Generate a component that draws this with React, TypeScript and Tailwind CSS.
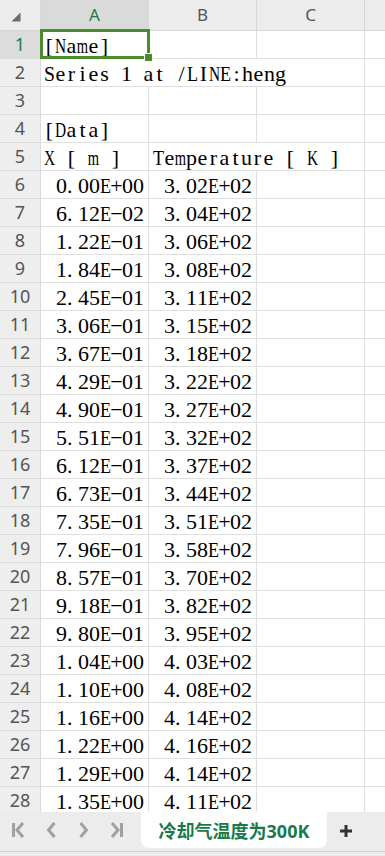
import clsx from "clsx";

const colA = [
  "0.00E+00", "6.12E-02", "1.22E-01", "1.84E-01", "2.45E-01", "3.06E-01",
  "3.67E-01", "4.29E-01", "4.90E-01", "5.51E-01", "6.12E-01", "6.73E-01",
  "7.35E-01", "7.96E-01", "8.57E-01", "9.18E-01", "9.80E-01", "1.04E+00",
  "1.10E+00", "1.16E+00", "1.22E+00", "1.29E+00", "1.35E+00",
];

const colB = [
  "3.02E+02", "3.04E+02", "3.06E+02", "3.08E+02", "3.11E+02", "3.15E+02",
  "3.18E+02", "3.22E+02", "3.27E+02", "3.32E+02", "3.37E+02", "3.44E+02",
  "3.51E+02", "3.58E+02", "3.70E+02", "3.82E+02", "3.95E+02", "4.03E+02",
  "4.08E+02", "4.14E+02", "4.16E+02", "4.14E+02", "4.11E+02",
];

// wide serif glyphs get squeezed into the half-width cell, like SimSun does
const squeeze: Record<string, string> = {
  m: "scale-x-[0.66]",
  N: "scale-x-[0.7]",
  K: "scale-x-[0.7]",
  X: "scale-x-[0.7]",
  D: "scale-x-[0.7]",
  T: "scale-x-[0.82]",
  E: "scale-x-[0.82]",
  L: "scale-x-[0.82]",
  S: "scale-x-[0.9]",
};

function Sim({ text }: { text: string }) {
  return (
    <span className="whitespace-nowrap">
      {Array.from(text).map((ch, i) => (
        <span
          key={i}
          className={clsx(
            "inline-flex w-[11px]",
            ch === "." ? "justify-start" : "justify-center",
            squeeze[ch],
          )}
        >
          {ch === "-" ? "−" : ch === " " ? "\u00a0" : ch}
        </span>
      ))}
    </span>
  );
}

const cell =
  "border-r border-b border-[#e0e0e0] pt-[5px] leading-[20px] text-[22px] text-black font-['Liberation_Serif',serif] whitespace-nowrap";
const lastCell = "border-b border-[#e0e0e0]";

function RowLabel({ n }: { n: number }) {
  return (
    <div
      className={clsx(
        "flex items-center justify-center border-r border-b border-[#dadada] text-[18px] font-['Noto_Sans',sans-serif]",
        n === 1 ? "bg-[#dcdcdc] text-[#1d7a4c]" : "bg-[#eeeeee] text-[#555555]",
      )}
    >
      {n}
    </div>
  );
}

function Row({ n }: { n: number }) {
  // the last row runs under the sheet tab bar, so it is cut short
  const grid = clsx(
    "grid grid-cols-[41px_108px_108px_108px_1fr]",
    n === 28 ? "h-[25px]" : "h-[28px]",
  );

  if (n === 2) {
    return (
      <div className={grid}>
        <RowLabel n={n} />
        <div className={clsx(cell, "col-span-3 pl-[3px]")}>
          <Sim text="Series 1 at /LINE:heng" />
        </div>
        <div className={lastCell} />
      </div>
    );
  }

  if (n === 5) {
    return (
      <div className={grid}>
        <RowLabel n={n} />
        <div className={clsx(cell, "pl-[3px]")}>
          <Sim text="X [ m ]" />
        </div>
        <div className={clsx(cell, "col-span-2 pl-[4px]")}>
          <Sim text="Temperature [ K ]" />
        </div>
        <div className={lastCell} />
      </div>
    );
  }

  const left = n === 1 ? "[Name]" : n === 4 ? "[Data]" : "";
  const a = n >= 6 ? colA[n - 6] : "";
  const b = n >= 6 ? colB[n - 6] : "";

  return (
    <div className={grid}>
      <RowLabel n={n} />
      <div className={clsx(cell, "relative", a ? "pr-[4px] text-right" : "pl-[3px]")}>
        {left && <Sim text={left} />}
        {a && <Sim text={a} />}
        {n === 1 && (
          <div className="absolute -left-[1px] -top-[2px] h-[30px] w-[110px] border-[3px] border-[#4a8d2c]">
            <div className="absolute -bottom-[5px] -right-[5px] h-[7px] w-[7px] bg-[#4a8d2c] ring-1 ring-white" />
          </div>
        )}
      </div>
      <div className={clsx(cell, "pr-[4px] text-right")}>{b && <Sim text={b} />}</div>
      <div className={cell} />
      <div className={lastCell} />
    </div>
  );
}

function NavIcon({ d }: { d: string[] }) {
  return (
    <div className="flex h-[36px] w-[33px] items-center justify-center">
      <svg width="20" height="20" viewBox="0 0 20 20" fill="none" stroke="#a0a0a0" strokeWidth="3" strokeLinecap="butt" strokeLinejoin="miter">
        {d.map((p, i) => (
          <path key={i} d={p} />
        ))}
      </svg>
    </div>
  );
}

export default function App() {
  const head = "flex items-center justify-center border-r border-b border-[#d8d8d8] text-[17px] font-['Noto_Sans',sans-serif]";

  return (
    <div className="flex h-[856px] w-[385px] flex-col overflow-hidden bg-white">
      <div className="h-[812px] overflow-hidden">
        <div className="grid h-[31px] grid-cols-[41px_108px_108px_108px_1fr]">
          <div className="flex items-start justify-start border-r border-b border-[#d8d8d8] bg-[#ececec] pl-[11px] pt-[12px]">
            <svg width="10" height="10" viewBox="0 0 10 10">
              <path d="M9.5 0.5 L9.5 9.5 L0.5 9.5 Z" fill="#6b6b6b" />
            </svg>
          </div>
          <div className={clsx(head, "bg-[#dadada] text-[#1d7a4c]")}>A</div>
          <div className={clsx(head, "bg-[#ececec] text-[#555555]")}>B</div>
          <div className={clsx(head, "bg-[#ececec] text-[#555555]")}>C</div>
          <div className="border-b border-[#d8d8d8] bg-[#ececec]" />
        </div>
        {Array.from({ length: 28 }, (_, i) => (
          <Row key={i} n={i + 1} />
        ))}
      </div>

      <div className="flex h-[44px] flex-col bg-[#ececec]">
        <div className="flex h-[39px] items-start">
          <div className="flex w-[141px] pl-[1px]">
            <NavIcon d={["M5.5 3v14", "M15 3l-6 7 6 7"]} />
            <NavIcon d={["M13.5 3l-6 7 6 7"]} />
            <NavIcon d={["M6.5 3l6 7-6 7"]} />
            <NavIcon d={["M5 3l6 7-6 7", "M14.5 3v14"]} />
          </div>
          <div className="flex h-[36px] w-[186px] items-center justify-center rounded-b-[8px] bg-white pt-[2px] text-[18px] font-bold text-[#187a4b] font-['Noto_Sans','Noto_Sans_CJK_SC',sans-serif]">
            冷却气温度为300K
          </div>
          <div className="flex h-[36px] w-[38px] items-center justify-center pt-[2px]">
            <svg width="14" height="14" viewBox="0 0 14 14" stroke="#333333" strokeWidth="3">
              <path d="M7 1v12M1 7h12" />
            </svg>
          </div>
        </div>
        <div className="flex-1 border-t border-[#d4d4d4]" />
      </div>
    </div>
  );
}
